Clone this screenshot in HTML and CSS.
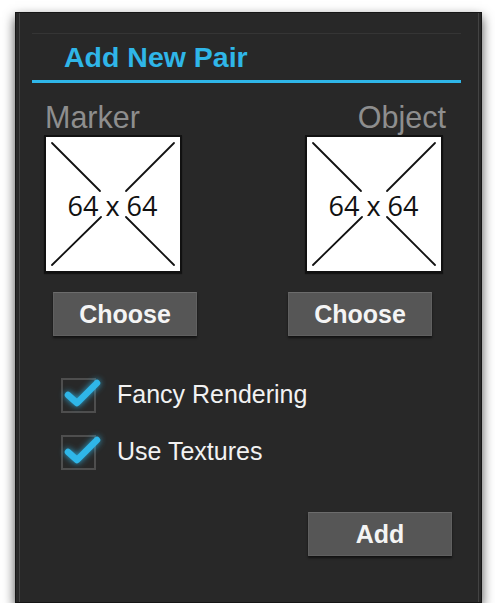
FILE: index.html
```html
<!DOCTYPE html>
<html>
<head>
<meta charset="utf-8">
<link rel="stylesheet" href="styles.css">
</head>
<body>
<div class="panel">
  <div class="inner">
    <div class="header"><div class="title">Add New Pair</div></div>
    <div class="labels"><span>Marker</span><span>Object</span></div>
    <div class="boxes">
      <div class="thumb">
        <svg class="cross" viewBox="0 0 134 134" width="134" height="134">
          <g stroke="#111" stroke-width="1.8" stroke-linecap="round">
            <line x1="6" y1="6" x2="54" y2="54"/>
            <line x1="6" y1="128" x2="55" y2="80"/>
            <line x1="128" y1="6" x2="80" y2="54"/>
            <line x1="128" y1="128" x2="80" y2="80"/>
          </g>
        </svg>
        <span class="dim">64 x 64</span>
      </div>
      <div class="thumb">
        <svg class="cross" viewBox="0 0 134 134" width="134" height="134">
          <g stroke="#111" stroke-width="1.8" stroke-linecap="round">
            <line x1="6" y1="6" x2="54" y2="54"/>
            <line x1="6" y1="128" x2="55" y2="80"/>
            <line x1="128" y1="6" x2="80" y2="54"/>
            <line x1="128" y1="128" x2="80" y2="80"/>
          </g>
        </svg>
        <span class="dim">64 x 64</span>
      </div>
    </div>
    <div class="buttons">
      <div class="btn">Choose</div>
      <div class="btn">Choose</div>
    </div>
    <div class="checks">
      <div class="check-row">
        <div class="cbox">
          <svg class="tick" viewBox="0 0 40 30" width="40" height="30">
            <polyline points="7,17 16,25 36,5" fill="none" stroke="#2fb6e8" stroke-width="6.5" stroke-linecap="round" stroke-linejoin="round"/>
          </svg>
        </div>
        <span class="clabel">Fancy Rendering</span>
      </div>
      <div class="check-row">
        <div class="cbox">
          <svg class="tick" viewBox="0 0 40 30" width="40" height="30">
            <polyline points="7,17 16,25 36,5" fill="none" stroke="#2fb6e8" stroke-width="6.5" stroke-linecap="round" stroke-linejoin="round"/>
          </svg>
        </div>
        <span class="clabel">Use Textures</span>
      </div>
    </div>
    <div class="footer"><div class="btn">Add</div></div>
  </div>
</div>
</body>
</html>
```
FILE: styles.css
```css
html, body {
  margin: 0;
  padding: 0;
  background: #ffffff;
}
body {
  font-family: "Liberation Sans", Arial, sans-serif;
}
.panel {
  box-sizing: border-box;
  margin: 12px 0 0 15px;
  width: 467px;
  height: 591px;
  border: 1px solid #161616;
  background: #282828;
  padding: 0 2px 0 3px;
  box-shadow: 0 5px 11px rgba(0,0,0,0.7);
}
.inner {
  height: 100%;
  border-left: 1px solid #434343;
  border-right: 1px solid #434343;
  display: flex;
  flex-direction: column;
}
.header {
  margin: 20px 17px 0 12px;
  border-top: 1px solid #353535;
  border-bottom: 3px solid #2fb6e8;
  padding: 7px 0 7px 32px;
}
.title {
  font-size: 28.5px;
  line-height: 32px;
  font-weight: bold;
  color: #2fb6e8;
}
.labels {
  margin: 18px 32px 0 25px;
  display: flex;
  justify-content: space-between;
  font-size: 30.5px;
  line-height: 32px;
  color: #8e8e8e;
}
.boxes {
  margin: 2px 35px 0 24px;
  display: flex;
  justify-content: space-between;
}
.thumb {
  position: relative;
  box-sizing: border-box;
  width: 138px;
  height: 138px;
  border: 2px solid #111;
  background: #fff;
  display: flex;
  align-items: center;
  justify-content: center;
  box-shadow: 0 1px 1px rgba(0,0,0,0.5);
}
.cross {
  position: absolute;
  left: 0;
  top: 0;
}
.dim {
  position: relative;
  font-family: "Open Sans", sans-serif;
  font-size: 27px;
  line-height: 30px;
  color: #111;
  margin: 3px 0 0 -1px;
}
.buttons {
  margin: 19px 46px 0 33px;
  display: flex;
  justify-content: space-between;
}
.btn {
  box-sizing: border-box;
  width: 144px;
  height: 44px;
  background: #565656;
  border: 1px solid #606060;
  border-top-color: #6c6c6c;
  box-shadow: 0 2px 2px rgba(0,0,0,0.55);
  color: #f4f4f4;
  font-weight: bold;
  font-size: 25px;
  line-height: 42px;
  text-align: center;
}
.checks {
  margin: 42px 0 0 41px;
  display: flex;
  flex-direction: column;
  gap: 22px;
}
.check-row {
  display: flex;
  align-items: center;
  gap: 21px;
}
.cbox {
  position: relative;
  box-sizing: border-box;
  width: 35px;
  height: 35px;
  border: 2px solid #4e4e4e;
}
.tick {
  position: absolute;
  left: -2px;
  top: -2px;
  overflow: visible;
  filter: drop-shadow(0 0 3px rgba(47,182,232,0.9));
}
.clabel {
  font-size: 25px;
  line-height: 30px;
  color: #f2f2f2;
  margin-top: -4px;
}
.footer {
  margin: 42px 26px 0 0;
  display: flex;
  justify-content: flex-end;
}
```
